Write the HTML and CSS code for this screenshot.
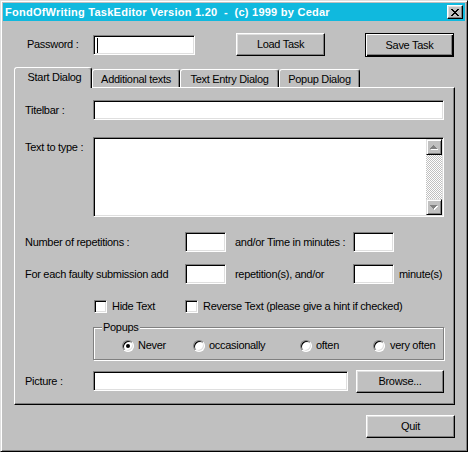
FILE: index.html
```html
<!DOCTYPE html>
<html>
<head>
<meta charset="utf-8">
<link rel="stylesheet" href="styles.css">
</head>
<body>
<div class="window">
  <div class="titlebar">
    <span class="title">FondOfWriting TaskEditor Version 1.20  -  (c) 1999 by Cedar</span>
    <div class="close">
      <svg width="8" height="7" viewBox="0 0 8 7" shape-rendering="crispEdges">
        <path fill="#000" d="M0 0h2v1H0zM6 0h2v1H6zM1 1h2v1H1zM5 1h2v1H5zM2 2h4v1H2zM3 3h2v1H3zM2 4h4v1H2zM1 5h2v1H1zM5 5h2v1H5zM0 6h2v1H0zM6 6h2v1H6z"/>
      </svg>
    </div>
  </div>

  <div class="toprow">
    <span class="pw-lbl">Password :</span>
    <div class="field pw"><span class="caret"></span></div>
    <div class="btn load">Load Task</div>
    <div class="btn default save">Save Task</div>
  </div>

  <div class="tabs">
    <div class="tab active">Start Dialog</div>
    <div class="tab t2">Additional texts</div>
    <div class="tab t3">Text Entry Dialog</div>
    <div class="tab t4">Popup Dialog</div>
  </div>

  <div class="panel">
    <div class="row r-title">
      <span class="lbl w68">Titelbar :</span>
      <div class="field wide"></div>
    </div>

    <div class="row r-text">
      <span class="lbl w68 top">Text to type :</span>
      <div class="field area">
        <div class="scroll">
          <div class="sbtn">
            <svg width="8" height="5" viewBox="0 0 8 5" shape-rendering="crispEdges">
              <path fill="#fff" transform="translate(1 1)" d="M3 0h1v1h1v1h1v1h1v1H0V3h1V2h1V1h1z"/>
              <path fill="#808080" d="M3 0h1v1h1v1h1v1h1v1H0V3h1V2h1V1h1z"/>
            </svg>
          </div>
          <div class="track"></div>
          <div class="sbtn">
            <svg width="8" height="5" viewBox="0 0 8 5" shape-rendering="crispEdges">
              <path fill="#fff" transform="translate(1 1)" d="M0 0h7v1H6v1H5v1H4v1H3V3H2V2H1V1H0z"/>
              <path fill="#808080" d="M0 0h7v1H6v1H5v1H4v1H3V3H2V2H1V1H0z"/>
            </svg>
          </div>
        </div>
      </div>
    </div>

    <div class="row r-num">
      <span class="lbl w160">Number of repetitions :</span>
      <div class="field small"></div>
      <span class="mid">and/or Time in minutes :</span>
      <div class="field small"></div>
    </div>

    <div class="row r-faulty">
      <span class="lbl w160">For each faulty submission add</span>
      <div class="field small"></div>
      <span class="mid">repetition(s), and/or</span>
      <div class="field small"></div>
      <span class="tail">minute(s)</span>
    </div>

    <div class="row r-check">
      <div class="check c1"><span class="box"></span>Hide Text</div>
      <div class="check"><span class="box"></span>Reverse Text (please give a hint if checked)</div>
    </div>

    <fieldset class="group">
      <legend>Popups</legend>
      <div class="radios">
        <div class="radio r1"><span class="dot checked"></span>Never</div>
        <div class="radio r2"><span class="dot"></span>occasionally</div>
        <div class="radio r3"><span class="dot"></span>often</div>
        <div class="radio r4"><span class="dot"></span>very often</div>
      </div>
    </fieldset>

    <div class="row r-pic">
      <span class="lbl w68 pic-lbl">Picture :</span>
      <div class="field pic"></div>
      <div class="btn browse">Browse...</div>
    </div>
  </div>

  <div class="bottom">
    <div class="btn quit">Quit</div>
  </div>
</div>
</body>
</html>
```

FILE: styles.css
```css
* { box-sizing: border-box; }

html, body {
  margin: 0;
  padding: 0;
  background: #c0c0c0;
}

body {
  font: 11px/13px "Liberation Sans", Arial, sans-serif;
  letter-spacing: -0.3px;
  color: #000;
}

.window {
  width: 468px;
  height: 452px;
  border: 1px solid;
  border-color: #dfdfdf #000 #000 #dfdfdf;
  box-shadow: inset 1px 1px #fff, inset -1px -1px #808080;
  padding: 2px;
  background: #c0c0c0;
}

/* Title bar */
.titlebar {
  height: 18px;
  background: #10b9de;
  display: flex;
  align-items: center;
  justify-content: space-between;
  padding: 0 2px;
}

.title {
  color: #fff;
  font-weight: bold;
  letter-spacing: 0.25px;
  white-space: pre;
}

.close {
  width: 16px;
  height: 14px;
  background: #c0c0c0;
  border: 1px solid;
  border-color: #fff #000 #000 #fff;
  box-shadow: inset -1px -1px #808080, inset 1px 1px #dfdfdf;
  display: flex;
  align-items: center;
  justify-content: center;
}

.close svg { display: block; }

/* Generic controls */
.field {
  background: #fff;
  border: 1px solid;
  border-color: #808080 #fff #fff #808080;
  box-shadow: inset 1px 1px #000, inset -1px -1px #dfdfdf;
  height: 20px;
}

.btn {
  display: flex;
  align-items: center;
  justify-content: center;
  background: #c0c0c0;
  border: 1px solid;
  border-color: #fff #000 #000 #fff;
  box-shadow: inset -1px -1px #808080, inset 1px 1px #dfdfdf;
  white-space: nowrap;
}

.btn.default {
  border: 1px solid #000;
  box-shadow: inset 1px 1px #fff, inset -1px -1px #000, inset -2px -2px #808080;
}

/* Top row */
.toprow {
  display: flex;
  align-items: flex-start;
  margin-top: 12px;
  padding-left: 24px;
  height: 24px;
}

.pw-lbl {
  width: 66px;
  margin-top: 5px;
}

.field.pw {
  width: 102px;
  margin-top: 2px;
  padding: 2px 0 0 2px;
}

.caret {
  display: block;
  width: 1px;
  height: 15px;
  margin-left: 1px;
  background: #000;
}

.btn.load {
  width: 89px;
  height: 23px;
  margin-left: 41px;
}

.btn.save {
  width: 89px;
  height: 24px;
  margin-left: 40px;
}

/* Tabs */
.tabs {
  display: flex;
  align-items: flex-end;
  height: 20px;
  margin-top: 10px;
  margin-left: 11px;
}

.tab {
  height: 18px;
  padding-top: 3px;
  line-height: 13px;
  text-align: center;
  white-space: nowrap;
  background: #c0c0c0;
  border: 1px solid;
  border-bottom: none;
  border-color: #fff #000 transparent #fff;
  border-radius: 3px 3px 0 0;
  box-shadow: inset -1px 0 #808080;
}

.tab.active {
  width: 78px;
  height: 21px;
  margin-bottom: -1px;
  padding-left: 3px;
  position: relative;
  z-index: 1;
}

.tab.t2 { width: 88px; }
.tab.t3 { width: 99px; }
.tab.t4 { width: 81px; }

/* Panel */
.panel {
  margin-left: 11px;
  width: 441px;
  height: 318px;
  border: 1px solid;
  border-color: #fff #000 #000 #fff;
  box-shadow: inset -1px -1px #808080;
  padding: 12px 0 0 10px;
}

.row {
  display: flex;
  align-items: center;
  white-space: nowrap;
}

.lbl { flex: none; }
.w68 { width: 68px; }
.w160 { width: 160px; }

.r-title { height: 20px; }
.field.wide { width: 351px; }

.r-text {
  margin-top: 17px;
  align-items: flex-start;
}

.lbl.top { padding-top: 4px; }

.field.area {
  width: 351px;
  height: 80px;
  padding: 1px;
  display: flex;
  justify-content: flex-end;
}

.scroll {
  width: 16px;
  display: flex;
  flex-direction: column;
}

.sbtn {
  height: 16px;
  flex: none;
  display: flex;
  align-items: center;
  justify-content: center;
  background: #c0c0c0;
  border: 1px solid;
  border-color: #dfdfdf #000 #000 #dfdfdf;
  box-shadow: inset 1px 1px #fff, inset -1px -1px #808080;
}

.sbtn svg { display: block; }

.track {
  flex: 1;
  background: repeating-conic-gradient(#c0c0c0 0 25%, #fff 0 50%) 0 0 / 2px 2px;
}

.r-num {
  margin-top: 15px;
  height: 20px;
}

.r-faulty {
  margin-top: 12px;
  height: 20px;
}

.field.small { width: 41px; flex: none; }

.mid {
  width: 118px;
  margin-left: 9px;
  flex: none;
}

.tail { margin-left: 5px; }

/* Checkboxes */
.r-check {
  margin-top: 16px;
  height: 13px;
  padding-left: 69px;
}

.check {
  display: flex;
  align-items: center;
}

.check.c1 { width: 91px; }

.box {
  width: 13px;
  height: 13px;
  margin-right: 5px;
  flex: none;
  background: #fff;
  border: 1px solid;
  border-color: #808080 #fff #fff #808080;
  box-shadow: inset 1px 1px #000, inset -1px -1px #dfdfdf;
}

/* Group box */
.group {
  margin: 8px 0 0 68px;
  width: 351px;
  padding: 5px 0 7px 0;
  border: 1px solid #808080;
  box-shadow: inset 1px 1px #fff, 1px 1px #fff;
  min-width: 0;
}

.group legend {
  margin-left: 8px;
  padding: 0 1px;
  line-height: 13px;
  background: #c0c0c0;
}

.radios {
  display: flex;
  align-items: center;
  height: 13px;
  padding-left: 28px;
  white-space: nowrap;
}

.radio {
  display: flex;
  align-items: center;
  flex: none;
}

.radio.r1 { width: 71px; }
.radio.r2 { width: 107px; }
.radio.r3 { width: 73px; }
.radio.r4 .dot { margin-right: 5px; }

.dot {
  width: 12px;
  height: 12px;
  margin-right: 4px;
  flex: none;
  border-radius: 50%;
  background: #fff;
  border: 1px solid;
  border-color: #808080 #fff #fff #808080;
  box-shadow: inset 1px 1px #000, inset -1px -1px #dfdfdf;
  display: flex;
  align-items: center;
  justify-content: center;
}

.dot.checked::after {
  content: "";
  width: 4px;
  height: 4px;
  border-radius: 50%;
  background: #000;
}

/* Picture row */
.r-pic {
  margin-top: 10px;
  height: 23px;
  align-items: flex-start;
}

.pic-lbl { padding-top: 5px; }

.field.pic {
  width: 255px;
  margin-top: 1px;
}

.btn.browse {
  width: 88px;
  height: 23px;
  margin-left: 8px;
}

/* Bottom */
.bottom {
  display: flex;
  justify-content: flex-end;
  margin-top: 10px;
  padding-right: 10px;
}

.btn.quit {
  width: 89px;
  height: 23px;
}
```
